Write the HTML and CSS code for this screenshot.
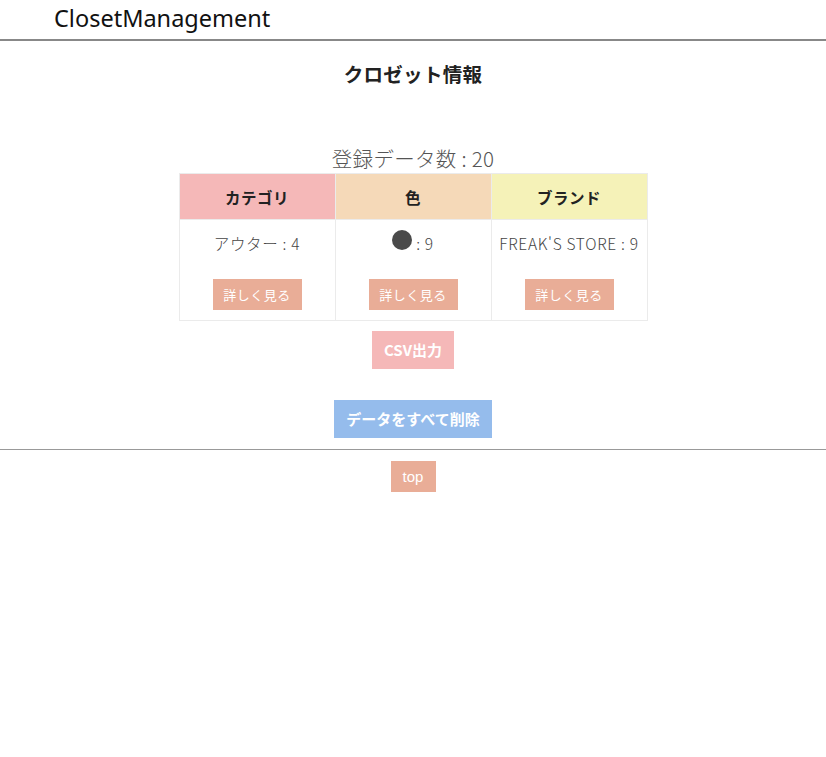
FILE: index.html
```html
<!DOCTYPE html>
<html lang="ja">
<head>
<meta charset="utf-8">
<title>ClosetManagement</title>
<link rel="stylesheet" href="styles.css">
</head>
<body>
<header class="site-header">
  <span class="logo">ClosetManagement</span>
</header>
<main class="main">
  <h1 class="page-title">クロゼット情報</h1>
  <p class="count">登録データ数 : 20</p>
  <table class="summary">
    <thead>
      <tr>
        <th class="th-cat">カテゴリ</th>
        <th class="th-color">色</th>
        <th class="th-brand">ブランド</th>
      </tr>
    </thead>
    <tbody>
      <tr>
        <td><div class="cell-text">アウター : 4</div><a class="btn-more">詳しく見る</a></td>
        <td><div class="cell-text"><span class="dot"></span> : 9</div><a class="btn-more">詳しく見る</a></td>
        <td><div class="cell-text">FREAK'S STORE : 9</div><a class="btn-more">詳しく見る</a></td>
      </tr>
    </tbody>
  </table>
  <div class="actions">
    <a class="btn btn-csv">CSV出力</a>
    <a class="btn btn-delete">データをすべて削除</a>
  </div>
</main>
<hr class="rule">
<footer class="footer">
  <a class="btn-top">top</a>
</footer>
</body>
</html>
```
FILE: styles.css
```css
html, body {
  margin: 0;
  padding: 0;
  background: #fff;
}
body {
  font-family: "Noto Sans CJK JP", "Noto Sans", sans-serif;
  color: #333;
}
.site-header {
  height: 39px;
  border-bottom: 2px solid #888;
  padding-left: 54px;
  box-sizing: content-box;
}
.logo {
  display: block;
  font-family: "Noto Sans", "Noto Sans CJK JP", sans-serif;
  font-size: 23.5px;
  line-height: 37px;
  color: #111;
  font-weight: 400;
}
.main {
  text-align: center;
}
.page-title {
  margin: 20px 0 0;
  font-size: 19.5px;
  line-height: 26px;
  font-weight: 700;
  color: #222;
  letter-spacing: 0.3px;
}
.count {
  margin: 56px 0 0;
  font-size: 20.5px;
  line-height: 30px;
  color: #555;
  font-weight: 300;
  letter-spacing: 0.3px;
}
.summary {
  margin: 0 auto;
  border-collapse: collapse;
  width: 469px;
  table-layout: fixed;
}
.summary th, .summary td {
  border: 1px solid #ebebeb;
  padding: 0;
}
.summary th {
  height: 45px;
  font-size: 15.5px;
  font-weight: 700;
  color: #222;
  letter-spacing: 0.5px;
}
.th-cat { background: #f5b8b8; }
.th-color { background: #f5d9b8; }
.th-brand { background: #f5f2b8; }
.summary td {
  height: 100px;
  vertical-align: top;
}
.cell-text {
  margin-top: 12px;
  height: 22px;
  font-size: 15.5px;
  line-height: 22px;
  color: #444;
  font-weight: 300;
  letter-spacing: 0.7px;
  display: flex;
  justify-content: center;
  align-items: center;
  gap: 4px;
  white-space: nowrap;
}
.dot {
  display: inline-block;
  width: 20px;
  height: 20px;
  border-radius: 50%;
  background: #4a4a4a;
  margin-top: -6px;
}
.btn-more {
  display: inline-block;
  margin-top: 25px;
  width: 89px;
  height: 31px;
  line-height: 31px;
  background: #e9ad97;
  color: #fff;
  font-size: 13px;
  letter-spacing: 0.5px;
}
.actions {
  display: flex;
  flex-direction: column;
  align-items: center;
  gap: 31px;
  margin-top: 10px;
}
.btn {
  display: inline-block;
  height: 38px;
  line-height: 38px;
  color: #fff;
  font-weight: 700;
  font-size: 15px;
  padding: 0 12px;
}
.btn-csv {
  background: #f5b8b8;
}
.btn-delete {
  background: #95bcec;
}
.rule {
  margin: 11px 0 0;
  border: 0;
  border-top: 1px solid #999;
  height: 0;
}
.footer {
  text-align: center;
  padding-top: 11px;
}
.btn-top {
  display: inline-block;
  width: 45px;
  height: 31px;
  line-height: 31px;
  background: #e9ad97;
  color: #fff;
  font-family: "Liberation Sans", Arial, sans-serif;
  font-size: 15px;
}
```
